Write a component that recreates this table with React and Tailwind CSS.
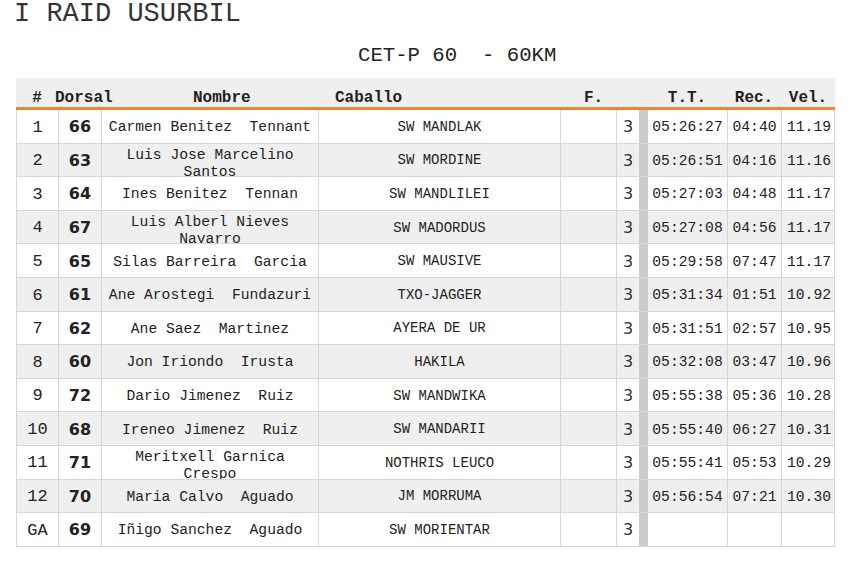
import React from "react";

const rows = [
  ["1", "66", "Carmen Benitez  Tennant", "SW MANDLAK", "05:26:27", "04:40", "11.19"],
  ["2", "63", "Luis Jose Marcelino\nSantos", "SW MORDINE", "05:26:51", "04:16", "11.16"],
  ["3", "64", "Ines Benitez  Tennan", "SW MANDLILEI", "05:27:03", "04:48", "11.17"],
  ["4", "67", "Luis Alberl Nieves\nNavarro", "SW MADORDUS", "05:27:08", "04:56", "11.17"],
  ["5", "65", "Silas Barreira  Garcia", "SW MAUSIVE", "05:29:58", "07:47", "11.17"],
  ["6", "61", "Ane Arostegi  Fundazuri", "TXO-JAGGER", "05:31:34", "01:51", "10.92"],
  ["7", "62", "Ane Saez  Martinez", "AYERA DE UR", "05:31:51", "02:57", "10.95"],
  ["8", "60", "Jon Iriondo  Irusta", "HAKILA", "05:32:08", "03:47", "10.96"],
  ["9", "72", "Dario Jimenez  Ruiz", "SW MANDWIKA", "05:55:38", "05:36", "10.28"],
  ["10", "68", "Ireneo Jimenez  Ruiz", "SW MANDARII", "05:55:40", "06:27", "10.31"],
  ["11", "71", "Meritxell Garnica\nCrespo", "NOTHRIS LEUCO", "05:55:41", "05:53", "10.29"],
  ["12", "70", "Maria Calvo  Aguado", "JM MORRUMA", "05:56:54", "07:21", "10.30"],
  ["GA", "69", "Iñigo Sanchez  Aguado", "SW MORIENTAR", "", "", ""],
];

const mono = { fontFamily: '"Liberation Mono", "Courier New", monospace' };
const sans = { fontFamily: '"DejaVu Sans", Verdana, sans-serif' };

const grid =
  "grid grid-cols-[42px_43px_217px_242px_56px_22px_9px_80px_54px_54px]";

export default function App() {
  return (
    <div className="w-[851px] h-[565px] bg-white text-[#222] overflow-hidden" style={mono}>
      <div className="pl-[14px] -mt-[1px] text-[27px] leading-[30px] text-[#333]">I RAID USURBIL</div>
      <div className="pl-[358px] mt-[16px] text-[20.67px] leading-[21px] text-[#222] whitespace-pre">
        {"CET-P 60  - 60KM"}
      </div>
      <div className="ml-[16px] w-[819px] mt-[12px]">
        <div
          className={`${grid} h-[32px] bg-[#efefef] border-b-[3px] border-[#f08434] items-end pb-[1px] text-[16px] leading-[16px] font-bold text-[#222]`}
        >
          <div className="text-center">#</div>
          <div className="-ml-[3px] whitespace-nowrap">Dorsal</div>
          <div className="pl-[92px]">Nombre</div>
          <div className="pl-[17px]">Caballo</div>
          <div className="pl-[24px]">F.</div>
          <div />
          <div />
          <div className="text-center">T.T.</div>
          <div className="text-center">Rec.</div>
          <div className="text-center">Vel.</div>
        </div>
        <div className="border-l border-r border-[#d6d6d6]">
          {rows.map((r, i) => {
            const wrap = r[2].includes("\n");
            const bg = i % 2 === 1 ? "bg-[#efefef]" : "bg-white";
            const cell = "h-full flex items-center justify-center pt-[2px] border-r border-[#d6d6d6]";
            return (
              <div
                key={i}
                className={`${grid} h-[33.6px] ${bg} border-b border-[#d6d6d6]`}
              >
                <div className={`${cell} text-[17px]`}>{r[0]}</div>
                <div className={`${cell} text-[16px] font-bold`} style={sans}>
                  {r[1]}
                </div>
                <div
                  className={`h-full flex justify-center overflow-hidden border-r border-[#d6d6d6] text-[14.67px] whitespace-pre text-center ${
                    wrap ? "items-start pt-[3.5px] leading-[17px]" : "items-center pt-[2px]"
                  }`}
                >
                  <div>{r[2]}</div>
                </div>
                <div className={`${cell} text-[14px] whitespace-pre`}>{r[3]}</div>
                <div className={cell} />
                <div className={`${cell} text-[16px] text-[#333] border-r-0`} style={sans}>
                  3
                </div>
                <div className="h-full bg-[#cccccc]" />
                <div className={`${cell} text-[14.67px]`}>{r[4]}</div>
                <div className={`${cell} text-[14.67px]`}>{r[5]}</div>
                <div className={`${cell} text-[14.67px] border-r-0`}>{r[6]}</div>
              </div>
            );
          })}
        </div>
      </div>
    </div>
  );
}
